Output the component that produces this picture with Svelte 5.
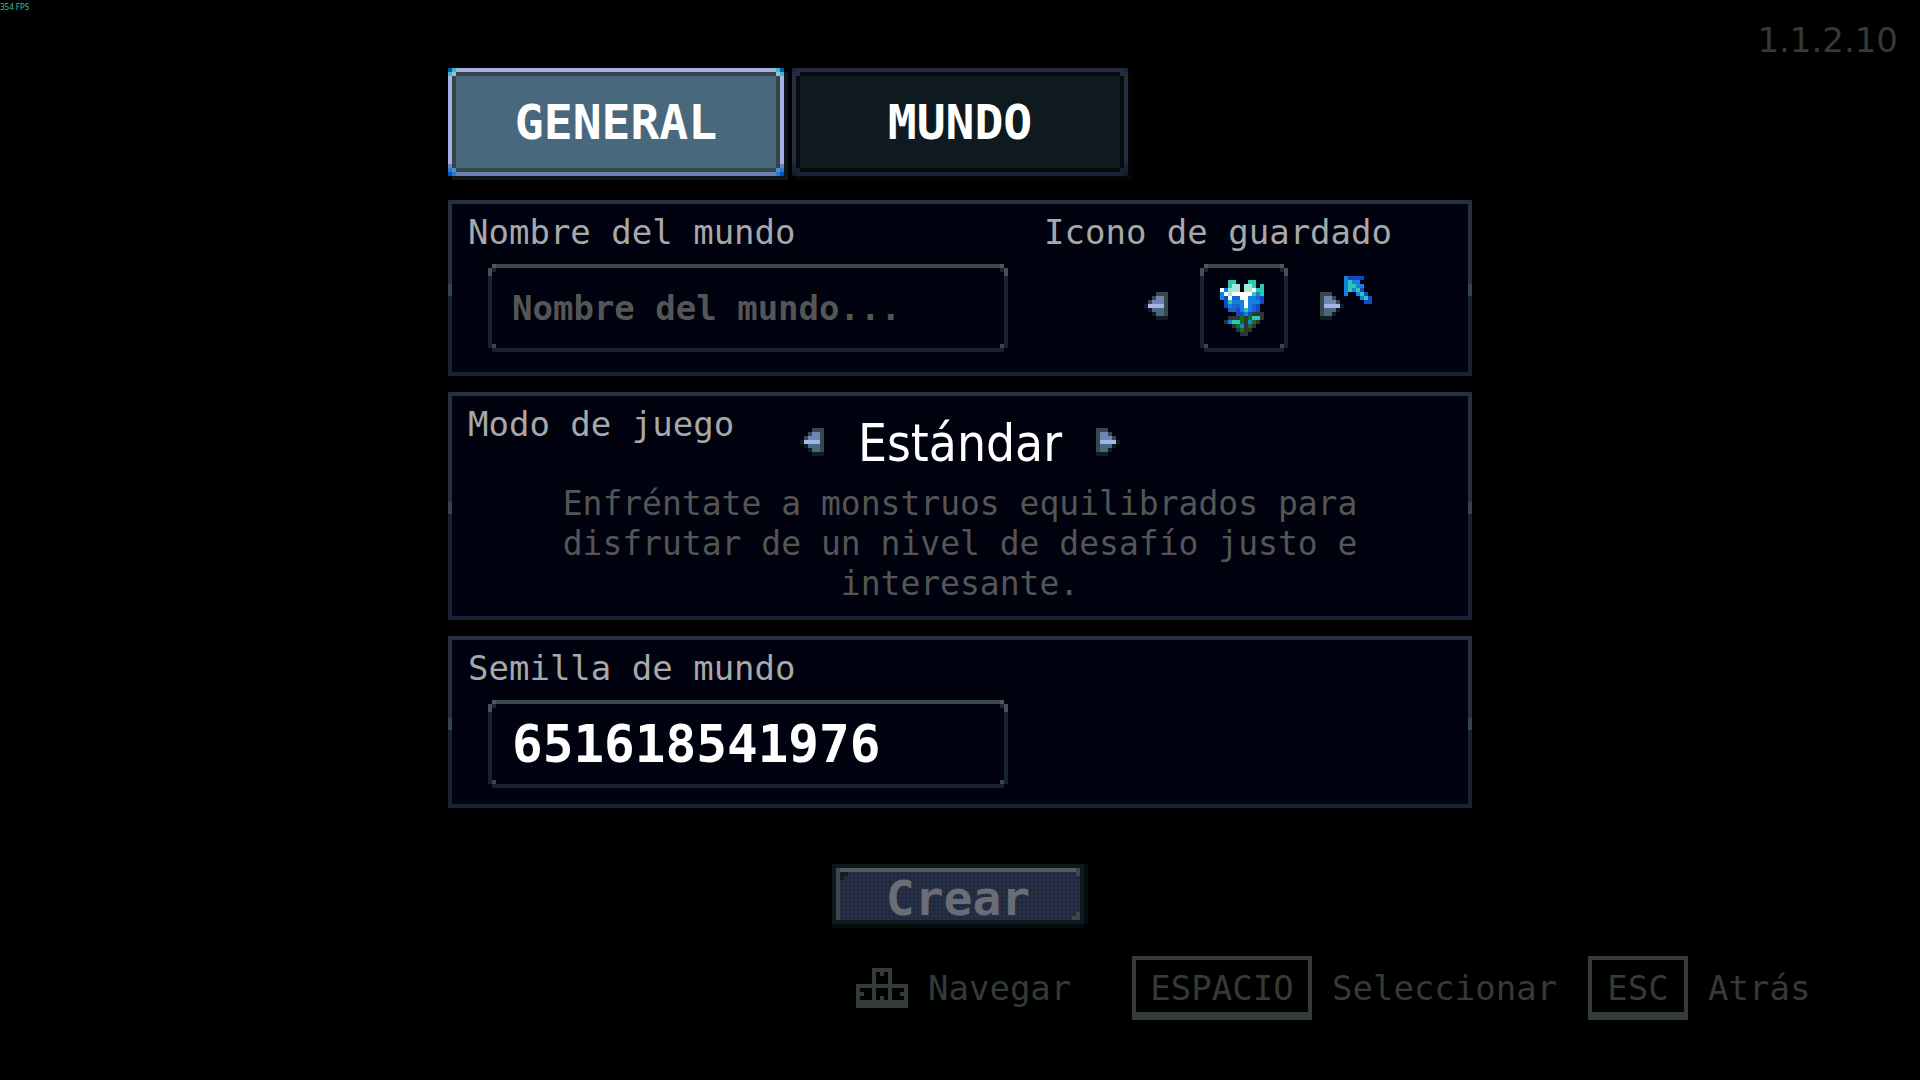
<script lang="ts">
	type Tab = 'general' | 'mundo';

	let tab: Tab = $state('general');
	let worldName = $state('');
	let seed = $state('651618541976');

	const palette: Record<string, string> = {
		w: '#ffffff',
		t: '#2bc8b4',
		x: '#a4e8dc',
		b: '#1680de',
		d: '#1448c4',
		m: '#1863d0',
		g: '#2f3735',
		G: '#14701c',
		p: '#6f83b6',
		l: '#a6b3e8',
		s: '#48687e',
		e: '#37474a',
		n: '#111b24',
		k: '#343a37'
	};

	const flower = [
		'..tt...tt..',
		'..txx.xxt.t',
		'wbxxx.xxwtt',
		'bwxwwwwwtbt',
		'bdwmmwwbbmd',
		'.dtbbbwbbbd',
		'.dbmmbwbmd.',
		'..mmdbtbmd.',
		'....ddbdggg',
		'..gggGgGttg',
		'.gbttGgbGg.',
		'...gGbgGg..',
		'....gGgg...',
		'.....gg....'
	];

	const arrow = ['...eee', '..eppe', '.epppe', 'nlllle', '.nssse', '..nsse', '...nnn'];
	const arrowRight = arrow.map((row) => [...row].reverse().join(''));

	const pointer = ['bdddd..', 'btbb...', 'bttbb..', 'btbtd..', 'b..btd.', '....btd', '.....dd'];

	const keys = [
		'....kkkkk....',
		'....k.k.k....',
		'....k...k....',
		'....k...k....',
		'kkkkkkkkkkkkk',
		'k...k...k...k',
		'kk..k...k..kk',
		'k...k.k.k...k',
		'kkkkkkkkkkkkk',
		'kkkkkkkkkkkkk'
	];
</script>

{#snippet sprite(rows: string[])}
	<svg
		width={rows[0].length * 4}
		height={rows.length * 4}
		viewBox="0 0 {rows[0].length} {rows.length}"
		shape-rendering="crispEdges"
		aria-hidden="true"
	>
		{#each rows as row, y}
			{#each [...row] as c, x}
				{#if c !== '.'}
					<rect {x} {y} width="1" height="1" fill={palette[c]} />
				{/if}
			{/each}
		{/each}
	</svg>
{/snippet}

<div class="screen">
	<span class="fps">354 FPS</span>
	<span class="version">1.1.2.10</span>

	<main class="menu">
		<div class="tabs">
			<button class="tab" class:active={tab === 'general'} onclick={() => (tab = 'general')}>GENERAL</button>
			<button class="tab" class:active={tab === 'mundo'} onclick={() => (tab = 'mundo')}>MUNDO</button>
		</div>

		<div class="panels">
			<section class="panel name-panel">
				<div class="field">
					<label class="label" for="world-name">Nombre del mundo</label>
					<input id="world-name" class="frame name" placeholder="Nombre del mundo..." bind:value={worldName} />
				</div>
				<div class="icon-field">
					<span class="label">Icono de guardado</span>
					<div class="icon-picker">
						<button class="arrow" aria-label="Icono anterior">{@render sprite(arrow)}</button>
						<div class="frame icon-box">{@render sprite(flower)}</div>
						<button class="arrow" aria-label="Icono siguiente">{@render sprite(arrowRight)}</button>
						<div class="pointer">{@render sprite(pointer)}</div>
					</div>
				</div>
			</section>

			<section class="panel mode-panel">
				<span class="label">Modo de juego</span>
				<div class="mode-picker">
					<button class="arrow" aria-label="Modo anterior">{@render sprite(arrow)}</button>
					<span class="mode">Estándar</span>
					<button class="arrow" aria-label="Modo siguiente">{@render sprite(arrowRight)}</button>
				</div>
				<p class="description">
					Enfréntate a monstruos equilibrados para disfrutar de un nivel de desafío justo e interesante.
				</p>
			</section>

			<section class="panel seed-panel">
				<div class="field">
					<label class="label" for="world-seed">Semilla de mundo</label>
					<input id="world-seed" class="frame seed" bind:value={seed} />
				</div>
			</section>
		</div>

		<button class="create" disabled>Crear</button>
	</main>

	<footer class="hints">
		<div class="hint">
			{@render sprite(keys)}
			<span>Navegar</span>
		</div>
		<div class="hint">
			<kbd class="wide">ESPACIO</kbd>
			<span>Seleccionar</span>
		</div>
		<div class="hint">
			<kbd>ESC</kbd>
			<span>Atrás</span>
		</div>
	</footer>
</div>

<style>
	:global(body) {
		background: #000;
	}

	.screen {
		position: relative;
		min-height: 100vh;
		box-sizing: border-box;
		padding-top: 68px;
		background: #000;
		color: #fff;
		font-family: 'DejaVu Sans Mono', monospace;
		font-size: 34px;
		line-height: 40px;
	}

	svg {
		display: block;
		flex-shrink: 0;
	}

	button,
	input,
	kbd {
		box-sizing: border-box;
		margin: 0;
		padding: 0;
		border: none;
		border-radius: 0;
		background: none;
		font: inherit;
		color: inherit;
	}

	button {
		cursor: pointer;
	}

	.fps {
		position: absolute;
		top: 0;
		left: 0;
		font-family: 'Noto Sans', sans-serif;
		font-size: 8px;
		line-height: 14px;
		color: #2bc8a0;
	}

	.version {
		position: absolute;
		top: 20px;
		right: 22px;
		font-family: 'DejaVu Sans', sans-serif;
		color: #343a37;
	}

	.menu {
		display: flex;
		flex-direction: column;
		max-width: 1024px;
		margin: 0 auto;
	}

	/* Tabs */
	.tabs {
		display: flex;
		gap: 8px;
		margin-bottom: 24px;
	}

	.tab {
		--edge: #272d40;
		--base: #182135;
		--line: #050c0e;
		--fill: #0f1a20;
		--corner: #1a2338;
		--tip: #272d40;
		--base-corner: #131b2e;
		--base-tip: #182135;
		width: 336px;
		height: 108px;
		font-size: 48px;
		font-weight: bold;
		line-height: 56px;
		background:
			linear-gradient(var(--corner), var(--corner)) left 0 top 0 / 4px 4px no-repeat,
			linear-gradient(var(--corner), var(--corner)) right 0 top 0 / 4px 4px no-repeat,
			linear-gradient(var(--edge), var(--edge)) left 4px top 4px / 4px 4px no-repeat,
			linear-gradient(var(--edge), var(--edge)) right 4px top 4px / 4px 4px no-repeat,
			linear-gradient(var(--tip), var(--tip)) left 0 top 0 / 8px 4px no-repeat,
			linear-gradient(var(--tip), var(--tip)) right 0 top 0 / 8px 4px no-repeat,
			linear-gradient(var(--tip), var(--tip)) left 0 top 0 / 4px 8px no-repeat,
			linear-gradient(var(--tip), var(--tip)) right 0 top 0 / 4px 8px no-repeat,
			linear-gradient(var(--base-corner), var(--base-corner)) left 0 bottom 0 / 4px 4px no-repeat,
			linear-gradient(var(--base-corner), var(--base-corner)) right 0 bottom 0 / 4px 4px no-repeat,
			linear-gradient(var(--base), var(--base)) left 4px bottom 4px / 4px 4px no-repeat,
			linear-gradient(var(--base), var(--base)) right 4px bottom 4px / 4px 4px no-repeat,
			linear-gradient(var(--base-tip), var(--base-tip)) left 0 bottom 0 / 8px 4px no-repeat,
			linear-gradient(var(--base-tip), var(--base-tip)) right 0 bottom 0 / 8px 4px no-repeat,
			linear-gradient(var(--base-tip), var(--base-tip)) left 0 bottom 0 / 4px 8px no-repeat,
			linear-gradient(var(--base-tip), var(--base-tip)) right 0 bottom 0 / 4px 8px no-repeat,
			linear-gradient(var(--base), var(--base)) left 0 bottom 0 / 4px 12px no-repeat,
			linear-gradient(var(--base), var(--base)) right 0 bottom 0 / 4px 12px no-repeat,
			linear-gradient(var(--base), var(--base)) bottom / 100% 4px no-repeat,
			linear-gradient(var(--edge), var(--edge)) top / 100% 4px no-repeat,
			linear-gradient(var(--edge), var(--edge)) left / 4px 100% no-repeat,
			linear-gradient(var(--edge), var(--edge)) right / 4px 100% no-repeat,
			linear-gradient(var(--fill), var(--fill)) center / calc(100% - 16px) calc(100% - 16px) no-repeat,
			var(--line);
		box-shadow: 4px 4px #020607;
	}

	.tab.active {
		--edge: #a5b1e6;
		--base: #6c81b4;
		--line: #35454a;
		--fill: #48687e;
		--corner: #1448c4;
		--tip: #2bc8b4;
		--base-corner: #1448c4;
		--base-tip: #1680de;
		box-shadow: 4px 4px #0d171d;
	}

	/* Panels */
	.panels {
		display: flex;
		flex-direction: column;
		gap: 16px;
		margin-bottom: 56px;
	}

	.panel {
		--side: linear-gradient(
			#272f40 0 calc(50% - 4px),
			#37454a calc(50% - 4px) calc(50% + 8px),
			#192235 calc(50% + 8px)
		);
		padding: 12px 20px 24px;
		background:
			linear-gradient(#272f40, #272f40) top / calc(100% - 8px) 4px no-repeat,
			linear-gradient(#192235, #192235) bottom / 100% 4px no-repeat,
			var(--side) left / 4px 100% no-repeat,
			var(--side) right / 4px 100% no-repeat,
			#00020f;
	}

	.label {
		display: block;
		color: #a8a8a8;
	}

	.arrow {
		padding-bottom: 4px;
	}

	.frame {
		height: 88px;
		background:
			linear-gradient(#565656, #565656) left 4px top 0 / 4px 4px no-repeat,
			linear-gradient(#565656, #565656) right 4px top 0 / 4px 4px no-repeat,
			linear-gradient(#4a4f52, #4a4f52) left 0 top 4px / 4px 8px no-repeat,
			linear-gradient(#4a4f52, #4a4f52) right 0 top 4px / 4px 8px no-repeat,
			linear-gradient(#1c2538, #1c2538) left 4px top 4px / 4px 4px no-repeat,
			linear-gradient(#1c2538, #1c2538) right 4px top 4px / 4px 4px no-repeat,
			linear-gradient(#3a484e, #3a484e) left 4px bottom 4px / 4px 4px no-repeat,
			linear-gradient(#3a484e, #3a484e) right 4px bottom 4px / 4px 4px no-repeat,
			linear-gradient(#3a484e, #3a484e) top / calc(100% - 8px) 4px no-repeat,
			linear-gradient(#192235, #192235) bottom / calc(100% - 8px) 4px no-repeat,
			linear-gradient(#192235, #192235) left / 4px calc(100% - 8px) no-repeat,
			linear-gradient(#192235, #192235) right / 4px calc(100% - 8px) no-repeat,
			#00020f;
	}

	input.frame {
		display: block;
		width: 520px;
		margin: 12px 0 0 20px;
		padding: 0 24px;
		font-weight: bold;
		outline: none;
	}

	.name::placeholder {
		color: #555;
		opacity: 1;
	}

	input.seed {
		font-size: 51px;
	}

	.name-panel {
		display: grid;
		grid-template-columns: 576px 1fr;
		padding-right: 28px;
	}

	.icon-picker {
		position: relative;
		display: flex;
		align-items: center;
		gap: 32px;
		width: 200px;
		margin: 12px auto 0;
	}

	.icon-box {
		display: flex;
		flex: 1;
		align-items: center;
		justify-content: center;
		box-sizing: border-box;
		padding-right: 4px;
	}

	.pointer {
		position: absolute;
		top: 12px;
		left: 100%;
		pointer-events: none;
	}

	.mode-panel {
		display: grid;
		grid-template-columns: 1fr 320px 1fr;
		row-gap: 12px;
		padding-bottom: 16px;
	}

	.mode-picker {
		display: flex;
		align-items: center;
		justify-content: space-between;
		margin-top: 12px;
	}

	.mode {
		font-family: 'DejaVu Sans Condensed', 'DejaVu Sans', sans-serif;
		font-size: 51px;
		line-height: 56px;
	}

	.description {
		grid-column: 1 / -1;
		max-width: 832px;
		margin: 0 auto;
		font-size: 33px;
		text-align: center;
		color: #555;
	}

	.seed-panel {
		padding-bottom: 20px;
	}

	/* Create button */
	.create {
		align-self: center;
		width: 252px;
		height: 60px;
		margin-right: 4px;
		padding-top: 8px;
		border: 4px solid #0d171c;
		font-size: 48px;
		font-weight: bold;
		line-height: 44px;
		color: #6b6d76;
		background:
			linear-gradient(#3a484e, #3a484e) right 0 top 0 / 4px 8px no-repeat,
			linear-gradient(#3a484e, #3a484e) right 0 bottom 4px / 4px 4px no-repeat,
			linear-gradient(#3a484e, #3a484e) right 0 bottom 0 / 8px 4px no-repeat,
			linear-gradient(#3a484e, #3a484e) left / 4px 100% no-repeat,
			linear-gradient(#57585b, #57585b) top / 100% 4px no-repeat,
			linear-gradient(#121b26, #121b26) left 4px top 4px / 8px 4px no-repeat,
			linear-gradient(#121b26, #121b26) left 4px top 4px / 4px 8px no-repeat,
			radial-gradient(#1e263b 1px, transparent 1px) 0 0 / 4px 4px,
			#262e45;
		background-origin: padding-box;
		box-shadow: 4px 0 #050b0e, 0 4px #050b0e;
		cursor: default;
	}

	/* Key hints */
	.hints {
		display: grid;
		grid-template-columns: 276px 456px 222px;
		justify-content: end;
		align-items: center;
		margin-top: 32px;
		padding-right: 110px;
		color: #343a37;
	}

	.hint {
		display: flex;
		align-items: center;
		gap: 20px;
	}

	kbd {
		min-width: 100px;
		height: 64px;
		padding-top: 2px;
		border: 4px solid #343a37;
		border-bottom-width: 8px;
		line-height: 52px;
		text-align: center;
	}

	.wide {
		min-width: 180px;
	}
</style>
